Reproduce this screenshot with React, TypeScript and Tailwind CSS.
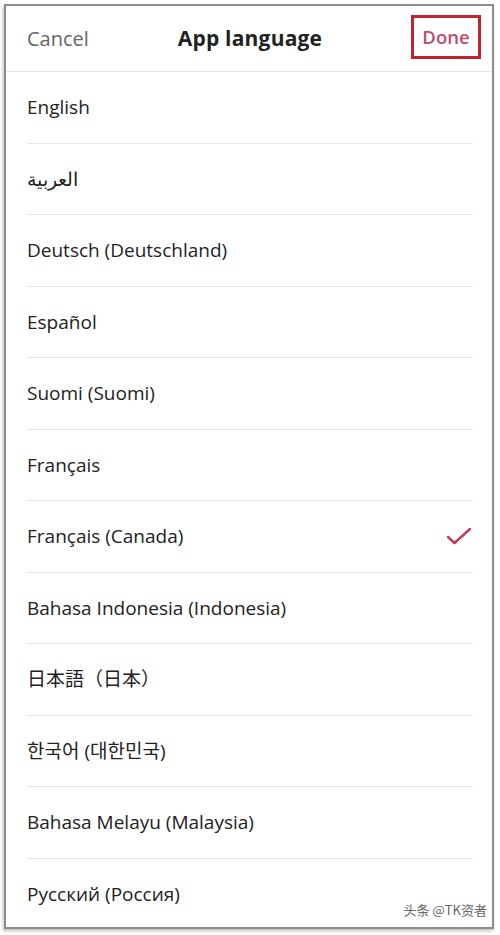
const languages = [
  "English",
  "العربية",
  "Deutsch (Deutschland)",
  "Español",
  "Suomi (Suomi)",
  "Français",
  "Français (Canada)",
  "Bahasa Indonesia (Indonesia)",
  "日本語（日本）",
  "한국어 (대한민국)",
  "Bahasa Melayu (Malaysia)",
  "Русский (Россия)",
];

const selected = "Français (Canada)";

function Check() {
  return (
    <svg width="26" height="20" viewBox="0 0 26 20" fill="none">
      <path
        d="M2 11L8.5 17L24 3"
        stroke="#c13a5c"
        strokeWidth="2.4"
        strokeLinecap="round"
        strokeLinejoin="round"
      />
    </svg>
  );
}

export default function App() {
  return (
    <div className="w-[500px] h-[935px] bg-white pt-[4px] pl-[4px] font-['Open_Sans','Noto_Sans','Noto_Sans_CJK_JP',sans-serif]">
      <div className="relative w-[490px] h-[925px] border-2 border-[#8c8c8c] bg-white shadow-[-1px_2px_3px_rgba(0,0,0,0.25)] flex flex-col">
        {/* Header */}
        <div className="h-[66px] shrink-0 border-b border-[#e4e4e4] flex items-center justify-between pl-[21px] pr-[11px]">
          <span className="text-[20px] text-[#666] w-[100px]">Cancel</span>
          <span className="text-[21px] font-bold text-[#222] tracking-[0.2px]">App language</span>
          <div className="w-[108px] flex justify-end -mt-[4px]">
            <span className="h-[44px] w-[70px] border-[3px] border-[#c3242b] flex items-center justify-center text-[18.5px] font-semibold text-[#c04a6e]">
              Done
            </span>
          </div>
        </div>

        {/* List */}
        <div className="flex flex-col">
          {languages.map((lang, i) => (
            <div
              key={lang}
              className={`h-[71.5px] shrink-0 ml-[21px] mr-[19px] flex items-center justify-between ${
                i < languages.length - 1 ? "border-b border-[#e6e6e6]" : ""
              }`}
            >
              <span dir="auto" className="text-[19px] text-[#222]">
                {lang}
              </span>
              {lang === selected && (
                <span className="mr-[1px]">
                  <Check />
                </span>
              )}
            </div>
          ))}
        </div>

        {/* Watermark */}
        <span className="absolute right-[5px] bottom-[8px] text-[13px] text-[#666] font-['Noto_Sans_CJK_SC',sans-serif]">
          头条 @TK资者
        </span>
      </div>
    </div>
  );
}
